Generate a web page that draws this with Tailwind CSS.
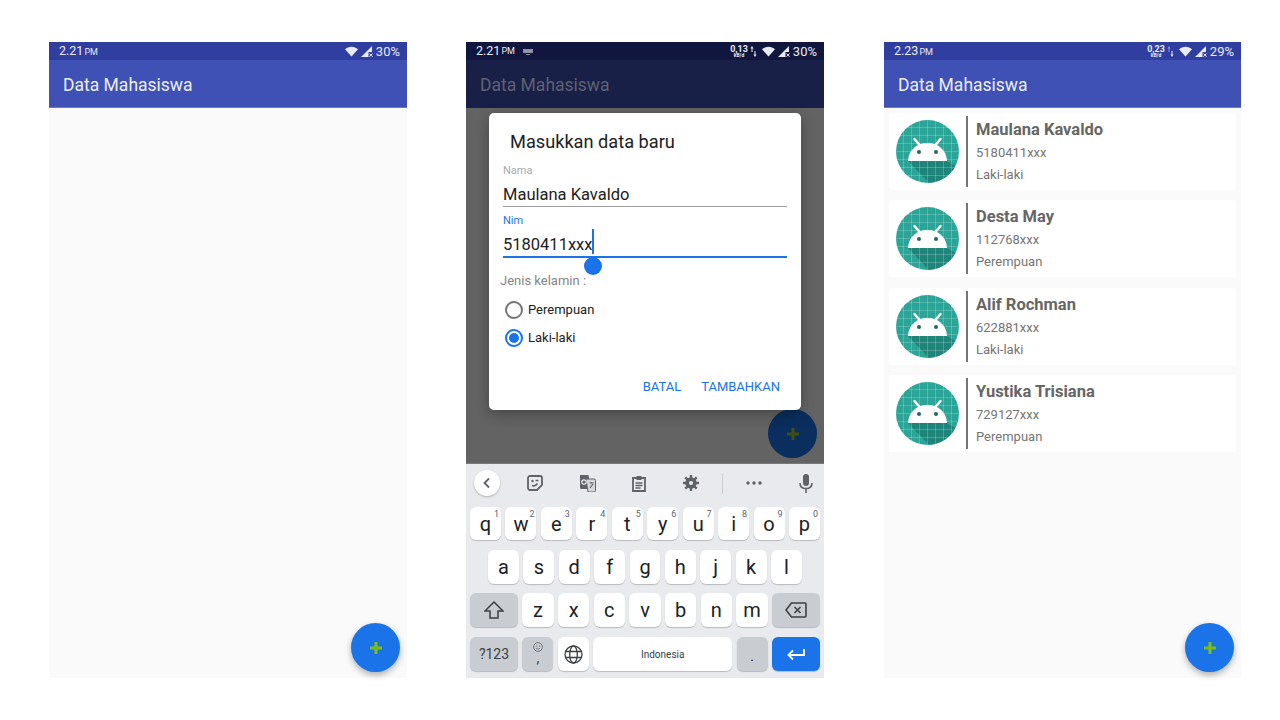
<!DOCTYPE html>
<html lang="en">
<head>
  <meta charset="UTF-8">
  <title>Data Mahasiswa</title>
  <script src="https://cdn.jsdelivr.net/npm/@tailwindcss/browser@4"></script>
</head>
<body class="bg-white w-[1280px] h-[720px] overflow-hidden font-['Roboto',sans-serif]">

  <!-- shared icons -->
  <svg class="hidden">
    <symbol id="wifi" viewBox="0 0 14 11"><path d="M0 3.200C3.800-.6 10.200-.6 14 3.200L7 11z" fill="currentColor"/></symbol>
    <symbol id="signal" viewBox="0 0 12 11"><path d="M0 11 11 0v6H7.500v5z" fill="currentColor"/><path d="M8.500 7.500l3 3.200M11.500 7.500l-3 3.200" stroke="currentColor" stroke-width="1"/></symbol>
    <symbol id="android" viewBox="0 0 63 63">
      <circle cx="31.5" cy="31.5" r="31.5" fill="#2aa598"/>
      <path d="M12 41H51L59.500 46A31.500 31.500 0 0 1 33 62.900z" fill="#1d7d74" opacity=".8"/>
      <g stroke="#fff" stroke-opacity=".2" stroke-width="1">
        <path d="M7.500 3v57M15.500 1v61M23.500 0v63M31.500 0v63M39.500 0v63M47.500 1v61M55.500 3v57M3 7.500h57M1 15.500h61M0 23.500h63M0 31.500h63M0 39.500h63M1 47.500h61M3 55.500h57"/>
      </g>
      <path d="M12 41c.6-11 8.500-18 19.500-18S50.400 30 51 41z" fill="#fff"/>
      <path d="M18.500 19l5.500 6.500M44.500 19 39 25.500" stroke="#fff" stroke-width="2.400" stroke-linecap="round"/>
      <circle cx="23" cy="32" r="2" fill="#26665f"/>
      <circle cx="40" cy="32" r="2" fill="#26665f"/>
    </symbol>
    <symbol id="plus" viewBox="0 0 12 12"><path d="M4.500 0h3v4.500H12v3H7.500V12h-3V7.500H0v-3h4.500z" fill="currentColor"/></symbol>
  </svg>

  <div class="flex items-start pt-[42px] pl-[49px] gap-[59px]">

    <!-- Phone 1: empty list -->
    <div class="relative w-[358px] h-[636px] flex flex-col bg-[#fafafa]">
      <div class="h-[18px] pt-[1px] bg-[#303f9f] flex items-center justify-between pl-[10px] pr-[7px] text-[#e8eaf6]">
        <span class="text-[12.500px]">2.21<span class="text-[9px] ml-[1px]">PM</span></span>
        <span class="flex items-center text-[13px]">
          <svg class="w-[13px] h-[11px] mr-[3px]"><use href="#wifi"/></svg>
          <svg class="w-[12px] h-[11px] mr-[3px]"><use href="#signal"/></svg>30%
        </span>
      </div>
      <div class="h-[48px] pt-[4px] bg-[#3f51b5] border-b border-[#6a78c8] flex items-center pl-[14px] text-[17.500px] text-[#eceef8]">Data Mahasiswa</div>
      <div class="absolute left-[302px] top-[581px] w-[49px] h-[49px] rounded-full bg-[#1a73e8] shadow-[0_3px_6px_rgba(0,0,0,0.3)] flex items-center justify-center text-[#7cc00f]">
        <svg class="w-[12px] h-[12px]"><use href="#plus"/></svg>
      </div>
    </div>

    <!-- Phone 2: dialog and keyboard -->
    <div class="relative w-[358px] h-[636px] flex flex-col bg-[#636363]">
      <div class="h-[18px] pt-[1px] bg-[#11163f] flex items-center justify-between pl-[10px] pr-[7px] text-[#e8eaf6]">
        <span class="flex items-center text-[12.500px]">2.21<span class="text-[9px] ml-[1px]">PM</span>
          <svg class="w-[10px] h-[6px] ml-[8px]" viewBox="0 0 10 6"><path d="M0 0h10v4H0zM3 5h4v1H3z" fill="#8f93a8"/></svg>
        </span>
        <span class="flex items-center text-[13px]">
          <span class="flex flex-col items-center font-bold text-[9px] leading-[7px] mr-[2px]">0,13<span class="text-[5px] leading-[5px]">kB/d</span></span>
          <svg class="w-[7px] h-[11px] mr-[5px]" viewBox="0 0 7 11"><path d="M2 0 .5 2.500H1.500V6h1V2.500h1zM5 11 3.500 8.500h1V5h1v3.500h1z" fill="#e8eaf6"/></svg>
          <svg class="w-[13px] h-[11px] mr-[3px]"><use href="#wifi"/></svg>
          <svg class="w-[12px] h-[11px] mr-[3px]"><use href="#signal"/></svg>30%
        </span>
      </div>
      <div class="h-[48px] pt-[3px] bg-[#192048] flex items-center pl-[14px] text-[17.500px] text-[#5f6270]">Data Mahasiswa</div>
      <div class="flex-1"></div>

      <!-- Keyboard -->
      <div class="h-[215px] bg-[#e8eaed] border-t border-[#7a7a7a] flex flex-col px-[4px] text-[#202124]">
        <div class="h-[43px] relative flex items-center">
          <div class="absolute left-[4px] top-[6px] w-[26px] h-[26px] rounded-full bg-white shadow-[0_1px_2px_rgba(0,0,0,0.25)] flex items-center justify-center">
            <svg class="w-[12px] h-[12px]" viewBox="0 0 12 12"><path d="M8 1.500 3.500 6 8 10.500" fill="none" stroke="#5f6368" stroke-width="1.800"/></svg>
          </div>
          <svg class="absolute left-[57px] top-[11px] w-[16px] h-[16px]" viewBox="0 0 16 16"><path d="M3 1h10a2 2 0 0 1 2 2v7l-5 5H3a2 2 0 0 1-2-2V3a2 2 0 0 1 2-2z" fill="none" stroke="#5f6368" stroke-width="1.800"/><circle cx="5.500" cy="6" r="1.200" fill="#5f6368"/><path d="M8.500 5.500h3M5 10.500c2 .8 4 .2 5.500-2" fill="none" stroke="#5f6368" stroke-width="1.500"/></svg>
          <svg class="absolute left-[109px] top-[11px] w-[17px] h-[17px]" viewBox="0 0 17 17"><path d="M1 0h8.500L12 14H2.500A1.500 1.500 0 0 1 1 12.500z" fill="#5f6368"/><path d="M7 4h8a1.500 1.500 0 0 1 1.500 1.500v10A1.500 1.500 0 0 1 15 17H9z" fill="#d5d7da" stroke="#5f6368"/><circle cx="5" cy="7" r="2.200" fill="none" stroke="#e8eaed" stroke-width="1.200"/><path d="M10.500 8h4M12.500 7v1M11 13l3-4" stroke="#5f6368" stroke-width="1.200"/></svg>
          <svg class="absolute left-[162px] top-[11px] w-[14px] h-[17px]" viewBox="0 0 14 17"><path d="M1 3h12v13H1z" fill="none" stroke="#5f6368" stroke-width="1.800"/><path d="M4.500 1h5v4h-5z" fill="#5f6368"/><path d="M3.500 8h7M3.500 10.500h7M3.500 13h5" stroke="#5f6368" stroke-width="1.300"/></svg>
          <svg class="absolute left-[213px] top-[11px] w-[16px] h-[16px]" viewBox="0 0 16 16"><circle cx="8" cy="8" r="4.200" fill="none" stroke="#5f6368" stroke-width="3"/><path d="M8 0v16M0 8h16M2.300 2.300l11.400 11.400M13.700 2.300 2.300 13.700" stroke="#5f6368" stroke-width="2.400"/><circle cx="8" cy="8" r="2" fill="#e8eaed"/></svg>
          <div class="absolute left-[252px] top-[9px] w-px h-[21px] bg-[#c9ccd1]"></div>
          <svg class="absolute left-[276px] top-[17px] w-[16px] h-[4px]" viewBox="0 0 16 4"><circle cx="2" cy="2" r="1.700" fill="#5f6368"/><circle cx="8" cy="2" r="1.700" fill="#5f6368"/><circle cx="14" cy="2" r="1.700" fill="#5f6368"/></svg>
          <svg class="absolute left-[329px] top-[10px] w-[14px] h-[19px]" viewBox="0 0 14 19"><rect x="4" y="0" width="6" height="12" rx="3" fill="#5f6368"/><path d="M1 9c0 3.500 2.500 5.500 6 5.500s6-2 6-5.500M7 14.500V19" fill="none" stroke="#5f6368" stroke-width="1.600"/></svg>
        </div>

        <div class="h-[33px] flex gap-[4.400px] text-[20px]">
          <div class="relative flex-1 bg-white rounded-[6px] shadow-[0_1px_1px_rgba(0,0,0,0.2)] flex items-center justify-center">q<span class="absolute right-[2px] top-[2px] text-[9px] leading-[10px] text-[#5f6368]">1</span></div>
          <div class="relative flex-1 bg-white rounded-[6px] shadow-[0_1px_1px_rgba(0,0,0,0.2)] flex items-center justify-center">w<span class="absolute right-[2px] top-[2px] text-[9px] leading-[10px] text-[#5f6368]">2</span></div>
          <div class="relative flex-1 bg-white rounded-[6px] shadow-[0_1px_1px_rgba(0,0,0,0.2)] flex items-center justify-center">e<span class="absolute right-[2px] top-[2px] text-[9px] leading-[10px] text-[#5f6368]">3</span></div>
          <div class="relative flex-1 bg-white rounded-[6px] shadow-[0_1px_1px_rgba(0,0,0,0.2)] flex items-center justify-center">r<span class="absolute right-[2px] top-[2px] text-[9px] leading-[10px] text-[#5f6368]">4</span></div>
          <div class="relative flex-1 bg-white rounded-[6px] shadow-[0_1px_1px_rgba(0,0,0,0.2)] flex items-center justify-center">t<span class="absolute right-[2px] top-[2px] text-[9px] leading-[10px] text-[#5f6368]">5</span></div>
          <div class="relative flex-1 bg-white rounded-[6px] shadow-[0_1px_1px_rgba(0,0,0,0.2)] flex items-center justify-center">y<span class="absolute right-[2px] top-[2px] text-[9px] leading-[10px] text-[#5f6368]">6</span></div>
          <div class="relative flex-1 bg-white rounded-[6px] shadow-[0_1px_1px_rgba(0,0,0,0.2)] flex items-center justify-center">u<span class="absolute right-[2px] top-[2px] text-[9px] leading-[10px] text-[#5f6368]">7</span></div>
          <div class="relative flex-1 bg-white rounded-[6px] shadow-[0_1px_1px_rgba(0,0,0,0.2)] flex items-center justify-center">i<span class="absolute right-[2px] top-[2px] text-[9px] leading-[10px] text-[#5f6368]">8</span></div>
          <div class="relative flex-1 bg-white rounded-[6px] shadow-[0_1px_1px_rgba(0,0,0,0.2)] flex items-center justify-center">o<span class="absolute right-[2px] top-[2px] text-[9px] leading-[10px] text-[#5f6368]">9</span></div>
          <div class="relative flex-1 bg-white rounded-[6px] shadow-[0_1px_1px_rgba(0,0,0,0.2)] flex items-center justify-center">p<span class="absolute right-[2px] top-[2px] text-[9px] leading-[10px] text-[#5f6368]">0</span></div>
        </div>

        <div class="h-[34px] mt-[10px] px-[18px] flex gap-[4.400px] text-[20px]">
          <div class="flex-1 bg-white rounded-[6px] shadow-[0_1px_1px_rgba(0,0,0,0.2)] flex items-center justify-center">a</div>
          <div class="flex-1 bg-white rounded-[6px] shadow-[0_1px_1px_rgba(0,0,0,0.2)] flex items-center justify-center">s</div>
          <div class="flex-1 bg-white rounded-[6px] shadow-[0_1px_1px_rgba(0,0,0,0.2)] flex items-center justify-center">d</div>
          <div class="flex-1 bg-white rounded-[6px] shadow-[0_1px_1px_rgba(0,0,0,0.2)] flex items-center justify-center">f</div>
          <div class="flex-1 bg-white rounded-[6px] shadow-[0_1px_1px_rgba(0,0,0,0.2)] flex items-center justify-center">g</div>
          <div class="flex-1 bg-white rounded-[6px] shadow-[0_1px_1px_rgba(0,0,0,0.2)] flex items-center justify-center">h</div>
          <div class="flex-1 bg-white rounded-[6px] shadow-[0_1px_1px_rgba(0,0,0,0.2)] flex items-center justify-center">j</div>
          <div class="flex-1 bg-white rounded-[6px] shadow-[0_1px_1px_rgba(0,0,0,0.2)] flex items-center justify-center">k</div>
          <div class="flex-1 bg-white rounded-[6px] shadow-[0_1px_1px_rgba(0,0,0,0.2)] flex items-center justify-center">l</div>
        </div>

        <div class="h-[34px] mt-[9px] flex gap-[4.400px] text-[20px]">
          <div class="w-[48px] bg-[#c9ccd1] rounded-[6px] shadow-[0_1px_1px_rgba(0,0,0,0.2)] flex items-center justify-center">
            <svg class="w-[20px] h-[18px]" viewBox="0 0 20 18"><path d="M10 1 1 10h5v7h8v-7h5z" fill="none" stroke="#3c4043" stroke-width="1.500"/></svg>
          </div>
          <div class="flex-1 bg-white rounded-[6px] shadow-[0_1px_1px_rgba(0,0,0,0.2)] flex items-center justify-center">z</div>
          <div class="flex-1 bg-white rounded-[6px] shadow-[0_1px_1px_rgba(0,0,0,0.2)] flex items-center justify-center">x</div>
          <div class="flex-1 bg-white rounded-[6px] shadow-[0_1px_1px_rgba(0,0,0,0.2)] flex items-center justify-center">c</div>
          <div class="flex-1 bg-white rounded-[6px] shadow-[0_1px_1px_rgba(0,0,0,0.2)] flex items-center justify-center">v</div>
          <div class="flex-1 bg-white rounded-[6px] shadow-[0_1px_1px_rgba(0,0,0,0.2)] flex items-center justify-center">b</div>
          <div class="flex-1 bg-white rounded-[6px] shadow-[0_1px_1px_rgba(0,0,0,0.2)] flex items-center justify-center">n</div>
          <div class="flex-1 bg-white rounded-[6px] shadow-[0_1px_1px_rgba(0,0,0,0.2)] flex items-center justify-center">m</div>
          <div class="w-[48px] bg-[#c9ccd1] rounded-[6px] shadow-[0_1px_1px_rgba(0,0,0,0.2)] flex items-center justify-center">
            <svg class="w-[22px] h-[16px]" viewBox="0 0 22 16"><path d="M6.500 1H20a1 1 0 0 1 1 1v12a1 1 0 0 1-1 1H6.500L1 8z" fill="none" stroke="#3c4043" stroke-width="1.600"/><path d="M9.500 5l6 6M15.500 5l-6 6" stroke="#3c4043" stroke-width="1.600"/></svg>
          </div>
        </div>

        <div class="h-[34px] mt-[10px] flex gap-[4.400px]">
          <div class="w-[48px] bg-[#c9ccd1] rounded-[6px] shadow-[0_1px_1px_rgba(0,0,0,0.2)] flex items-center justify-center text-[14px] text-[#3c4043]">?123</div>
          <div class="w-[31px] bg-[#c9ccd1] rounded-[6px] shadow-[0_1px_1px_rgba(0,0,0,0.2)] flex flex-col items-center justify-start pt-[5px]">
            <svg class="w-[10px] h-[10px]" viewBox="0 0 10 10"><circle cx="5" cy="5" r="4.400" fill="none" stroke="#5f6368" stroke-width=".8"/><circle cx="3.500" cy="4" r=".6" fill="#5f6368"/><circle cx="6.500" cy="4" r=".6" fill="#5f6368"/><path d="M3 6.200c1 1.200 3 1.200 4 0" fill="none" stroke="#5f6368" stroke-width=".7"/></svg>
            <span class="text-[14px] leading-[12px] text-[#3c4043]">,</span>
          </div>
          <div class="w-[31px] bg-white rounded-[6px] shadow-[0_1px_1px_rgba(0,0,0,0.2)] flex items-center justify-center">
            <svg class="w-[19px] h-[19px]" viewBox="0 0 19 19" fill="none" stroke="#3c4043" stroke-width="1.300"><circle cx="9.500" cy="9.500" r="8.500"/><ellipse cx="9.500" cy="9.500" rx="3.800" ry="8.500"/><path d="M1.500 6.500h16M1.500 12.500h16"/></svg>
          </div>
          <div class="flex-1 bg-white rounded-[6px] shadow-[0_1px_1px_rgba(0,0,0,0.2)] flex items-center justify-center text-[10px] text-[#3c4043]">Indonesia</div>
          <div class="w-[31px] bg-[#c9ccd1] rounded-[6px] shadow-[0_1px_1px_rgba(0,0,0,0.2)] flex items-center justify-center text-[14px] pt-[4px]">.</div>
          <div class="w-[48px] bg-[#1a73e8] rounded-[6px] shadow-[0_1px_1px_rgba(0,0,0,0.2)] flex items-center justify-center">
            <svg class="w-[18px] h-[11px]" viewBox="0 0 18 11"><path d="M17 0v6H2M6 1.500 1.500 6 6 10.500" fill="none" stroke="#fff" stroke-width="1.800"/></svg>
          </div>
        </div>
      </div>

      <!-- FAB, under the dialog -->
      <div class="absolute left-[302px] top-[367px] w-[49px] h-[49px] rounded-full bg-[#0a2e5d] flex items-center justify-center text-[#3d4f12]">
        <svg class="w-[12px] h-[12px]"><use href="#plus"/></svg>
      </div>

      <!-- Dialog -->
      <div class="absolute left-[23px] top-[71px] w-[312px] h-[297px] bg-white rounded-[5px] shadow-[0_4px_14px_rgba(0,0,0,0.3)] flex flex-col pl-[14px] pr-[14px] pt-[17px]">
        <div class="ml-[7px] h-[24px] leading-[24px] text-[18.200px] text-[#212121]">Masukkan data baru</div>
        <div class="mt-[10px] h-[14px] leading-[14px] text-[11px] text-[#aaaaaa]">Nama</div>
        <div class="mt-[3px] h-[26px] leading-[28px] text-[16.500px] text-[#212121] border-b border-[#9e9e9e]">Maulana Kavaldo</div>
        <div class="mt-[7px] h-[14px] leading-[14px] text-[11px] text-[#1a73e8]">Nim</div>
        <div class="relative mt-[3px] h-[27px] leading-[28px] text-[16.500px] text-[#212121] border-b-2 border-[#1a73e8]">5180411xxx
          <div class="absolute left-[89px] top-[-2px] w-[2px] h-[25px] bg-[#1a73e8]"></div>
          <div class="absolute left-[81px] top-[26px] w-[18px] h-[18px] rounded-full bg-[#1a73e8]"></div>
        </div>
        <div class="mt-[15px] -ml-[3px] h-[16px] leading-[16px] text-[13px] text-[#858585]">Jenis kelamin :</div>
        <div class="mt-[12px] ml-[2px] h-[18px] flex items-center gap-[5px] text-[13px] text-[#212121]">
          <div class="w-[18px] h-[18px] rounded-full border-2 border-[#757575]"></div>
          <span>Perempuan</span>
        </div>
        <div class="mt-[10px] ml-[2px] h-[18px] flex items-center gap-[5px] text-[13px] text-[#212121]">
          <div class="w-[18px] h-[18px] rounded-full border-2 border-[#1a73e8] flex items-center justify-center">
            <div class="w-[10px] h-[10px] rounded-full bg-[#1a73e8]"></div>
          </div>
          <span>Laki-laki</span>
        </div>
        <div class="mt-[32px] mr-[7px] flex justify-end gap-[20px] text-[13px] leading-[16px] text-[#1a73e8]">
          <span>BATAL</span>
          <span>TAMBAHKAN</span>
        </div>
      </div>
    </div>

    <!-- Phone 3: filled list -->
    <div class="relative w-[357px] h-[636px] ml-[1px] flex flex-col bg-[#fafafa]">
      <div class="h-[18px] pt-[1px] bg-[#303f9f] flex items-center justify-between pl-[10px] pr-[7px] text-[#e8eaf6]">
        <span class="text-[12.500px]">2.23<span class="text-[9px] ml-[1px]">PM</span></span>
        <span class="flex items-center text-[13px]">
          <span class="flex flex-col items-center font-bold text-[9px] leading-[7px] mr-[2px]">0,23<span class="text-[5px] leading-[5px]">kB/d</span></span>
          <svg class="w-[7px] h-[11px] mr-[5px]" viewBox="0 0 7 11"><path d="M2 0 .5 2.500H1.500V6h1V2.500h1z" fill="#8a94cc"/><path d="M5 11 3.500 8.500h1V5h1v3.500h1z" fill="#e8eaf6"/></svg>
          <svg class="w-[13px] h-[11px] mr-[3px]"><use href="#wifi"/></svg>
          <svg class="w-[12px] h-[11px] mr-[3px]"><use href="#signal"/></svg>29%
        </span>
      </div>
      <div class="h-[48px] pt-[4px] bg-[#3f51b5] border-b border-[#6a78c8] flex items-center pl-[14px] text-[17.500px] text-[#eceef8]">Data Mahasiswa</div>

      <div class="flex flex-col gap-[10.330px] px-[5px] pt-[5px]">
        <div class="h-[77px] bg-white rounded-[3px] flex items-center pl-[7px]">
          <svg class="w-[63px] h-[63px]"><use href="#android"/></svg>
          <div class="w-[2px] h-[71px] bg-[#757575] ml-[7px]"></div>
          <div class="ml-[8px] flex flex-col">
            <span class="text-[16.500px] leading-[25px] font-bold text-[#666666]">Maulana Kavaldo</span>
            <span class="text-[13px] leading-[21px] text-[#757575]">5180411xxx</span>
            <span class="text-[13px] leading-[23px] text-[#757575]">Laki-laki</span>
          </div>
        </div>
        <div class="h-[77px] bg-white rounded-[3px] flex items-center pl-[7px]">
          <svg class="w-[63px] h-[63px]"><use href="#android"/></svg>
          <div class="w-[2px] h-[71px] bg-[#757575] ml-[7px]"></div>
          <div class="ml-[8px] flex flex-col">
            <span class="text-[16.500px] leading-[25px] font-bold text-[#666666]">Desta May</span>
            <span class="text-[13px] leading-[21px] text-[#757575]">112768xxx</span>
            <span class="text-[13px] leading-[23px] text-[#757575]">Perempuan</span>
          </div>
        </div>
        <div class="h-[77px] bg-white rounded-[3px] flex items-center pl-[7px]">
          <svg class="w-[63px] h-[63px]"><use href="#android"/></svg>
          <div class="w-[2px] h-[71px] bg-[#757575] ml-[7px]"></div>
          <div class="ml-[8px] flex flex-col">
            <span class="text-[16.500px] leading-[25px] font-bold text-[#666666]">Alif Rochman</span>
            <span class="text-[13px] leading-[21px] text-[#757575]">622881xxx</span>
            <span class="text-[13px] leading-[23px] text-[#757575]">Laki-laki</span>
          </div>
        </div>
        <div class="h-[77px] bg-white rounded-[3px] flex items-center pl-[7px]">
          <svg class="w-[63px] h-[63px]"><use href="#android"/></svg>
          <div class="w-[2px] h-[71px] bg-[#757575] ml-[7px]"></div>
          <div class="ml-[8px] flex flex-col">
            <span class="text-[16.500px] leading-[25px] font-bold text-[#666666]">Yustika Trisiana</span>
            <span class="text-[13px] leading-[21px] text-[#757575]">729127xxx</span>
            <span class="text-[13px] leading-[23px] text-[#757575]">Perempuan</span>
          </div>
        </div>
      </div>

      <div class="absolute left-[301px] top-[581px] w-[49px] h-[49px] rounded-full bg-[#1a73e8] shadow-[0_3px_6px_rgba(0,0,0,0.3)] flex items-center justify-center text-[#7cc00f]">
        <svg class="w-[12px] h-[12px]"><use href="#plus"/></svg>
      </div>
    </div>
  </div>
</body>
</html>
